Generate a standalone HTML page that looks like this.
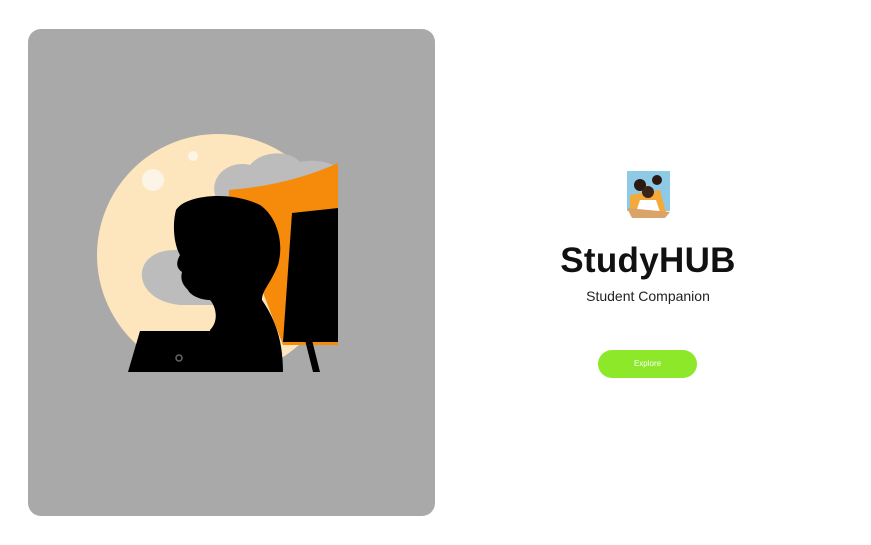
<!DOCTYPE html>
<html><head><style>
body{margin:0;width:871px;height:545px;background:#fff;font-family:"Liberation Sans",sans-serif;position:relative;overflow:hidden}
.panel{position:absolute;left:28px;top:29px;width:407px;height:487px;background:#a9a9a9;border-radius:13px}
svg.ill{position:absolute;left:0;top:0}
.title{position:absolute;left:548px;width:200px;top:241px;text-align:center;font-size:35px;font-weight:bold;color:#111;letter-spacing:0.3px}
.sub{position:absolute;left:548px;width:200px;top:288px;text-align:center;font-size:14px;color:#222}
.btn{position:absolute;left:598px;top:350px;width:99px;height:28px;border-radius:14px;background:#8de82a;color:#fff;font-size:8px;text-align:center;line-height:28px}
</style></head><body>
<div class="panel"></div>
<svg class="ill" width="871" height="545">
<defs><clipPath id="c"><rect x="90" y="120" width="248" height="252"/></clipPath></defs>
<circle cx="218" cy="255" r="121" fill="#fde6bd" clip-path="url(#c)"/>
<circle cx="153" cy="180" r="11" fill="#fdf4e8"/>
<circle cx="193" cy="156" r="5" fill="#fdf4e8"/>
<path d="M215,195 C210,175 230,160 250,165 C262,150 290,150 300,162 C320,158 335,165 338,168 L338,200 L215,210Z" fill="#bcbcbc"/>
<path d="M175,250 C130,250 130,300 180,305 L240,305 L240,235Z" fill="#bcbcbc"/>
<path d="M229,190 Q290,185 338,163 L338,345 L283,345 L262,290 L229,290Z" fill="#f68a0a"/>
<path d="M292,213 L338,208 L338,342 L283,342Z" fill="#000"/>
<path d="M305,340 L312,340 L320,372 L313,372Z" fill="#000"/>
<path d="M176,210 C185,195 230,190 260,205 C275,215 285,240 278,265 C270,285 262,290 262,300 C272,315 283,335 283,372 L210,372 L210,330 C220,320 215,305 210,300 C200,300 190,295 188,290 C183,285 180,280 182,272 C176,268 176,262 180,255 C174,245 172,225 176,210Z" fill="#000"/>
<path d="M140,331 L232,331 L232,372 L128,372Z" fill="#000"/>
<circle cx="179" cy="358" r="3" fill="none" stroke="#666" stroke-width="1.5"/>
<rect x="627" y="171" width="43" height="40" fill="#8ecae6"/>
<circle cx="640" cy="185" r="6" fill="#2a1a12"/>
<circle cx="657" cy="180" r="5" fill="#2a1a12"/>
<path d="M630,195 L660,190 L666,212 L630,212Z" fill="#f4a93b"/>
<circle cx="648" cy="192" r="6" fill="#3a2418"/>
<path d="M640,200 L656,200 L660,212 L636,212Z" fill="#fff"/>
<path d="M627,208 L670,212 L665,218 L632,218Z" fill="#d9a36a"/>
</svg>
<div class="title">StudyHUB</div>
<div class="sub">Student Companion</div>
<div class="btn">Explore</div>
</body></html>
